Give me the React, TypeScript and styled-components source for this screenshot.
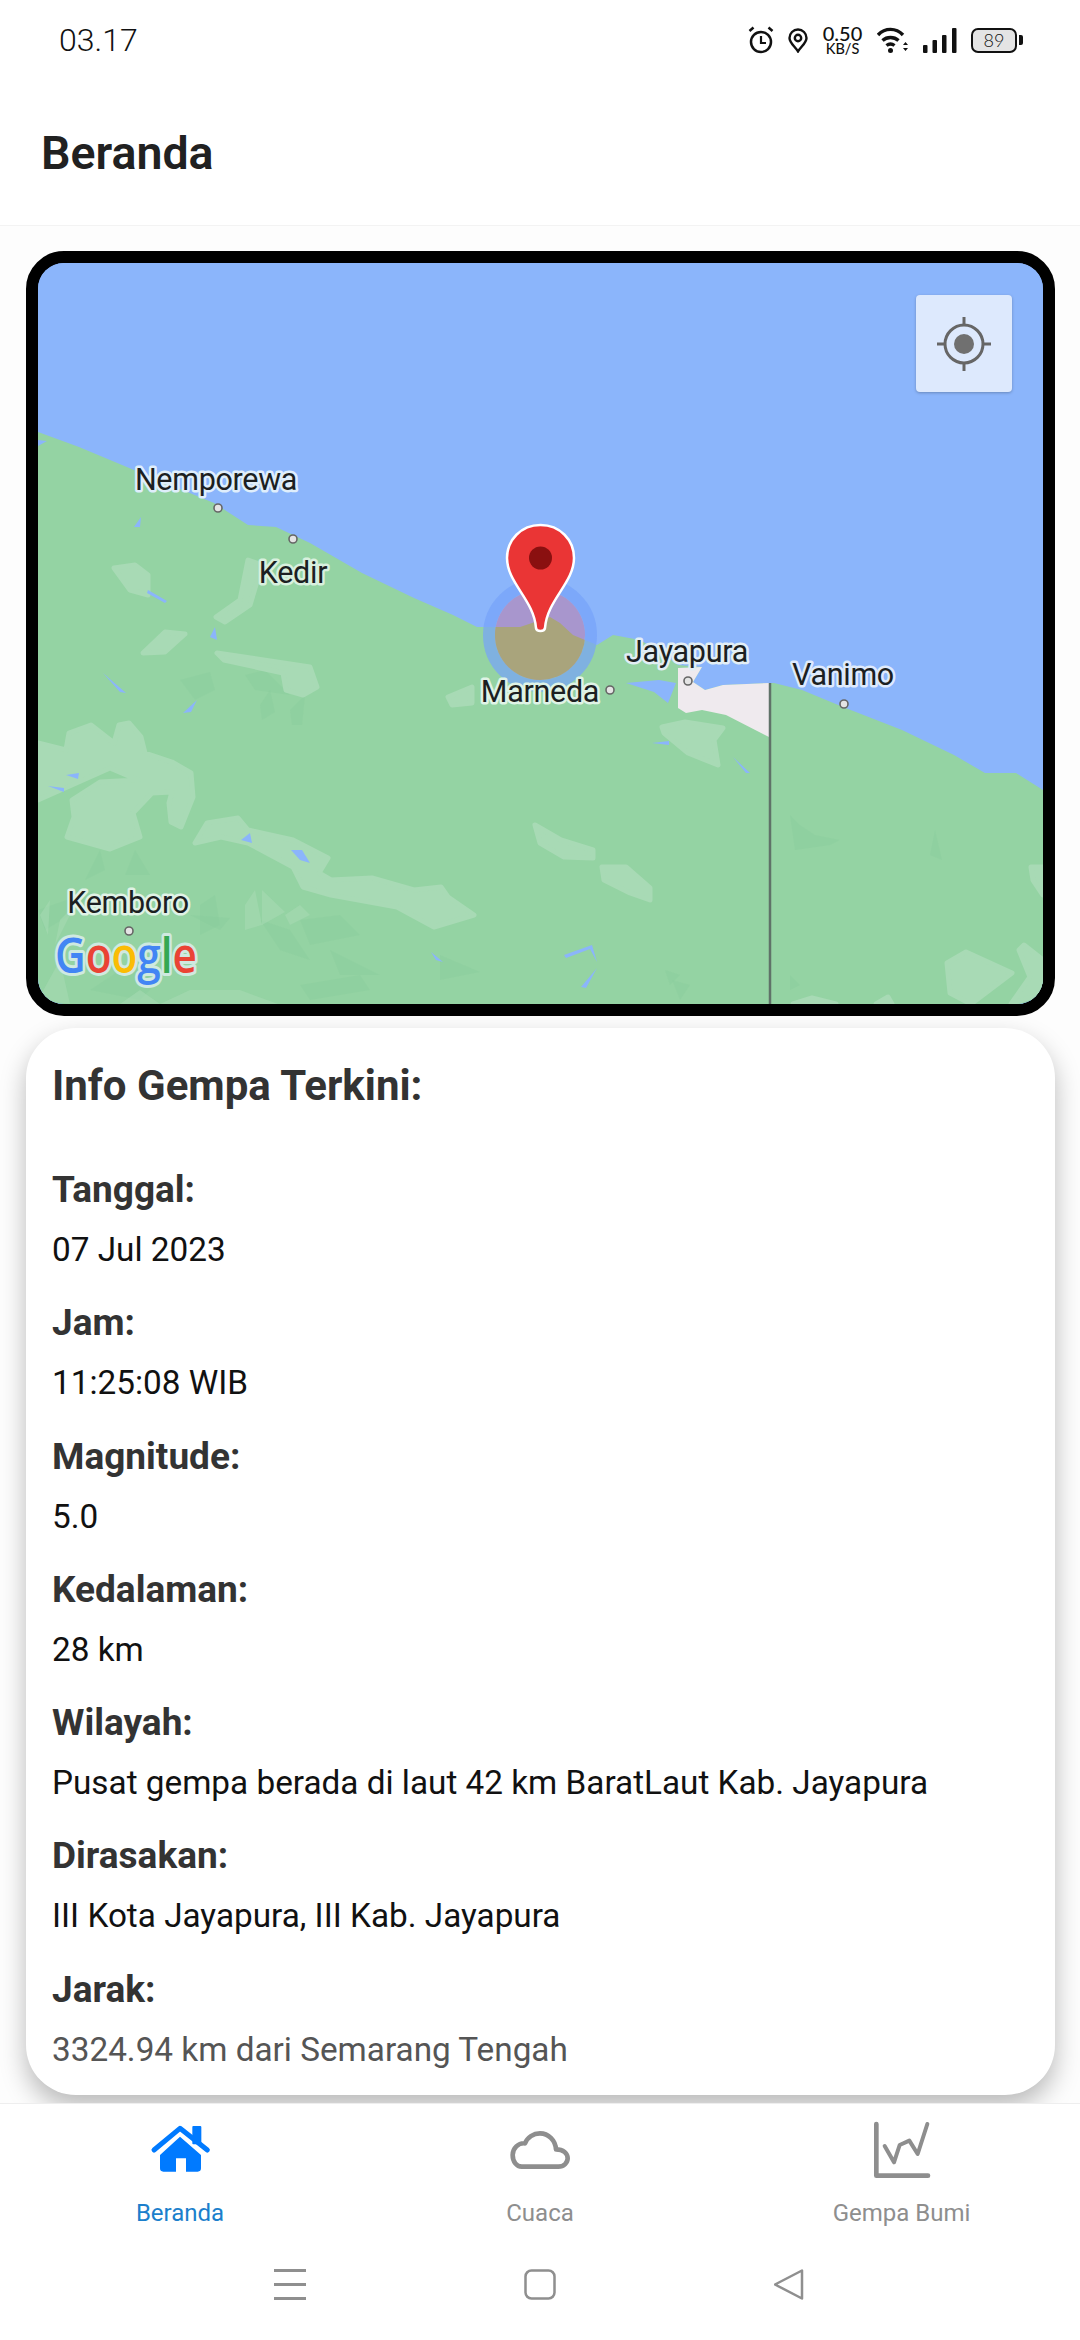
import React from 'react';
import styled, { createGlobalStyle } from 'styled-components';

const Global = createGlobalStyle`
  html, body { margin: 0; padding: 0; background: #fff; }
  body { font-family: Roboto, "Liberation Sans", sans-serif; }
  * { box-sizing: border-box; }
`;

const Screen = styled.div`
  width: 1080px; height: 2340px; display: flex; flex-direction: column; background: #fff; overflow: hidden;
`;
const StatusBar = styled.div`
  height: 80px; flex: none; display: flex; align-items: center; justify-content: space-between;
  padding: 0 58px 0 59px;
`;
const Clock = styled.span`
  font-family: Roboto, sans-serif; font-size: 32px; font-weight: 300; color: #111;
`;
const StatusIcons = styled.div`display: flex; align-items: center; gap: 14px;`;
const Speed = styled.div`
  display: flex; flex-direction: column; align-items: center; color: #111; font-family: Lato, Roboto, sans-serif;
  width: 41px; font-weight: 500;
`;
const SpeedValue = styled.span`font-size: 20px; line-height: 17px;`;
const SpeedUnit = styled.span`font-size: 14.5px; line-height: 13px;`;
const Battery = styled.div`
  position: relative; width: 46px; height: 25px; border: 2.5px solid #111; border-radius: 7px; background: #e4e4e4;
  display: flex; align-items: center; justify-content: center; font-family: Lato, sans-serif; font-size: 18px; font-weight: 300; color: #111;
  margin-right: 5px;
  &::after { content: ''; position: absolute; right: -7.5px; top: 5px; width: 3.5px; height: 10px; background: #111; border-radius: 0 2px 2px 0; }
`;
const Header = styled.header`
  height: 146px; flex: none; display: flex; align-items: center; padding: 2px 0 0 41px; border-bottom: 1px solid #f3f3f3;
`;
const Title = styled.h1`
  margin: 0; font-size: 46.5px; font-weight: 600; color: #212121; line-height: 1;
`;
const Content = styled.main`
  flex: 1; min-height: 0; padding: 25px 25px 8px 26px; display: flex; flex-direction: column; gap: 12px;
  background: #fdfdfd;
  position: relative; overflow: hidden;
`;
const MapFrame = styled.div`
  position: relative; height: 765px; flex: none; border: 12px solid #000; border-radius: 38px; overflow: hidden; background: #8ab4fb;
`;
const MapSvg = styled.svg`display: block; width: 100%; height: 100%;`;
const LocateButton = styled.div`
  position: absolute; top: 32px; right: 31px; width: 96px; height: 97px; border-radius: 4px;
  background: #dde9fd; box-shadow: 0 1px 3px rgba(0,0,0,.25); display: flex; align-items: center; justify-content: center;
`;
const Card = styled.section`
  flex: 1; min-height: 0; background: #fff; border-radius: 50px; padding: 34px 26px 0;
  box-shadow: 0 12px 26px rgba(0,0,0,.27);
`;
const CardTitle = styled.h2`
  margin: 0 0 56px; font-size: 42px; line-height: 48px; font-weight: 700; color: #333;
`;
const Field = styled.div`
  height: 133.3px;
`;
const Label = styled.div`
  font-size: 37px; line-height: 48px; font-weight: 700; color: #333;
`;
const Value = styled.div<{ $muted?: boolean }>`
  font-size: 33.3px; line-height: 40px; margin-top: 16px; color: ${p => (p.$muted ? '#555' : '#111')};
`;
const TabBar = styled.nav`
  height: 137px; flex: none; display: grid; grid-template-columns: repeat(3, 1fr); background: #fff;
  border-top: 1px solid #eee;
`;
const Tab = styled.div<{ $nudge?: boolean }>`
  display: flex; flex-direction: column; align-items: center; justify-content: flex-start; padding-top: 6px;
  padding-left: ${p => (p.$nudge ? '3px' : '0')};
`;
const TabLabel = styled.span<{ $active?: boolean }>`
  font-size: 24px; line-height: 28px; margin-top: 14px; color: ${p => (p.$active ? '#1b7fcc' : '#8e8e8e')};
`;
const SystemBar = styled.div`
  height: 100px; flex: none; display: flex; justify-content: center; align-items: flex-start; gap: 218px; padding-top: 29px; background: #fff;
`;

const land = '38,432 79,447 134,470 214,503 248,525 276,527 310,543 362,573 414,598 453,615 477,627 520,627 550,617 560,623 573,635 597,645 613,635 640,640 660,652 678,665 702,667 693,682 705,690 723,685 769,683 774,683 802,690 843,707 902,730 954,755 985,773 1016,773 1043,790 1043,1004 38,1004';

const lightPatches = [
  '114,568 130,590 148,595 148,575 135,565',
  '248,560 240,600 216,617 225,622 250,605 262,565',
  '143,653 165,632 185,634 165,652',
  '217,653 310,667 317,687 303,695 286,690 283,673 224,660',
  '38,743 66,750 69,733 91,725 114,743 119,725 129,723 141,737 145,753 172,762 191,773 193,797 181,827 171,822 169,803 172,792 152,793 133,813 140,837 110,849 67,837 74,817 72,800 100,782 138,780 110,768 38,800',
  '195,843 207,823 238,818 248,830 293,840 328,858 319,873 331,880 372,878 414,890 441,887 448,897 474,915 434,927 397,907 331,895 303,887 293,867 248,843 221,837',
  '448,697 472,687 472,703 452,705',
  '535,825 561,840 593,850 593,858 564,857 540,843',
  '602,867 626,867 650,888 650,900 630,893 604,880',
  '662,727 685,722 723,728 714,740 718,765 688,753 664,733',
  '947,963 966,952 1012,973 971,1004 950,993',
  '1019,950 1024,945 1043,960 1043,993 1011,1004 1030,977',
  '1031,867 1043,867 1043,895 1033,880',
  '793,1004 812,998 836,1004',
  '876,1004 888,997 892,1004',
];
const faintLight = [
  '38,1000 60,960 70,1004',
  '160,1004 190,990 240,990 278,1004',
  '120,1004 140,990 160,1004',
  '245,905 255,890 262,925 245,930',
  '262,890 285,912 262,925',
  '285,915 300,905 310,915 290,925',
  '40,915 50,900 48,935',
  '60,920 75,905 55,945',
];
const darkPatches = [
  '180,680 210,672 215,690 195,700',
  '245,675 265,670 290,695 255,690',
  '260,705 270,690 275,712 262,720',
  '290,710 305,695 302,725 292,725',
  '38,910 95,890 70,915 45,930',
  '100,850 85,880 105,870',
  '125,875 135,850 150,875',
  '200,905 215,895 220,925 200,935',
  '190,915 230,918 220,930',
  '260,920 290,930 310,960 280,950',
  '300,920 340,915 360,935 310,945',
  '330,950 380,975 340,975',
  '440,955 480,972 440,980',
  '300,985 360,975 370,990 310,1000',
  '790,815 800,825 815,835 840,840 830,845 795,850',
  '935,830 942,860 930,855',
  '672,980 690,985 680,1000',
  '665,970 680,975 670,985',
  '790,975 800,985 790,990',
  '128,965 165,975 140,1000 90,990',
];
const waters = [
  '66,775 79,773 78,779',
  '48,786 64,788 64,792',
  '241,840 250,833 252,843',
  '291,850 302,850 310,863 300,860',
  '183,713 197,700 191,712',
  '103,673 126,693 120,692',
  '431,952 443,962 436,960',
  '134,527 141,517 140,527',
  '210,637 215,627 217,640',
  '38,440 47,441 38,446',
  '148,590 167,601 165,603 147,593',
  '564,955 592,945 597,962 590,949 566,958',
  '581,987 597,968 586,988',
  '626,683 659,680 676,683 668,703 654,692',
  '652,743 669,741 669,745',
  '733,757 750,773 746,773',
];
const labels = [
  { t: 'Nemporewa', x: 216, y: 490, halo: '#dfeefb' },
  { t: 'Kedir', x: 293, y: 583, halo: '#d8f0de' },
  { t: 'Marneda', x: 540, y: 702, halo: '#dff3e6' },
  { t: 'Jayapura', x: 687, y: 662, halo: '#e2eef5' },
  { t: 'Vanimo', x: 843, y: 685, halo: '#deeafc' },
  { t: 'Kemboro', x: 128, y: 913, halo: '#e0f2e6' },
];
const dots = [[218, 508], [293, 539], [610, 690], [688, 681], [844, 704], [129, 931]];

const MapDrawing = () => (
  <MapSvg viewBox="38 263 1005 741" preserveAspectRatio="none">
    <defs>
      <clipPath id="landClip"><polygon points={land} /></clipPath>
    </defs>
    <rect x="38" y="263" width="1005" height="741" fill="#8bb5fb" />
    <polygon points={land} fill="#94d3a3" />
    {darkPatches.map((p, i) => <polygon key={i} points={p} fill="#86c89a" opacity={0.28} />)}
    {lightPatches.map((p, i) => <polygon key={i} points={p} fill="#a8dab5" stroke="#a8dab5" strokeWidth="5" strokeLinejoin="round" />)}
    {faintLight.map((p, i) => <polygon key={i} points={p} fill="#a9dbb6" opacity={0.5} />)}
    {waters.map((p, i) => <polygon key={i} points={p} fill="#8bb5fb" />)}
    <polygon points="678,668 702,667 693,682 705,690 723,685 769,683 769,737 726,715 702,710 686,713 678,708" fill="#efeaee" />
    <line x1="770" y1="683" x2="770" y2="1004" stroke="#5f7268" strokeWidth="2.5" />
    <circle cx="540" cy="635" r="51" fill="none" stroke="#76a3fa" strokeWidth="12" opacity="0.7" />
    <circle cx="540" cy="635" r="45" fill="#a896cd" />
    <circle cx="540" cy="635" r="45" fill="#a9a47c" clipPath="url(#landClip)" />
    {dots.map(([x, y], i) => <circle key={i} cx={x} cy={y} r="4" fill="#e4e4e4" stroke="#666" strokeWidth="1.6" />)}
    <g fontFamily="Roboto, sans-serif" fontSize="30.5" textAnchor="middle" fill="#1c1f22" strokeLinejoin="round">
      {labels.map(l => (
        <text key={l.t} x={l.x} y={l.y} stroke={l.halo} strokeWidth="5" paintOrder="stroke" letterSpacing="-0.3">{l.t}</text>
      ))}
    </g>
    <text x="55" y="973" fontFamily="'Open Sans', sans-serif" fontSize="49" fontWeight="600" stroke="#cfe9e0" strokeWidth="6" strokeLinejoin="round" paintOrder="stroke" textLength="142" lengthAdjust="spacingAndGlyphs">
      <tspan fill="#4285f4">G</tspan><tspan fill="#ea4335">o</tspan><tspan fill="#fbbc05">o</tspan><tspan fill="#4285f4">g</tspan><tspan fill="#34a853">l</tspan><tspan fill="#ea4335">e</tspan>
    </text>
    <path d="M540.5 525C521 525 507 540 507 558C507 583 534 600 536 628C536.5 632 544.5 632 545 628C547 600 574 583 574 558C574 540 560 525 540.5 525Z" fill="#ea3535" stroke="#fff" strokeWidth="2.5" />
    <circle cx="540.5" cy="558" r="11.5" fill="#8a1010" />
  </MapSvg>
);

const fields: { label: string; value: string; muted?: boolean }[] = [
  { label: 'Tanggal:', value: '07 Jul 2023' },
  { label: 'Jam:', value: '11:25:08 WIB' },
  { label: 'Magnitude:', value: '5.0' },
  { label: 'Kedalaman:', value: '28 km' },
  { label: 'Wilayah:', value: 'Pusat gempa berada di laut 42 km BaratLaut Kab. Jayapura' },
  { label: 'Dirasakan:', value: 'III Kota Jayapura, III Kab. Jayapura' },
  { label: 'Jarak:', value: '3324.94 km dari Semarang Tengah', muted: true },
];

export default function App() {
  return (
    <Screen>
      <Global />
      <StatusBar>
        <Clock>03.17</Clock>
        <StatusIcons>
          <svg width="26" height="28" viewBox="0 0 26 28" fill="none" stroke="#111" strokeWidth="2.5">
            <circle cx="13" cy="16" r="10" />
            <path d="M13 10v7h5" strokeWidth="2.2" />
            <path d="M1.500 5l4-3.500M24.500 5l-4-3.500" />
          </svg>
          <svg width="20" height="25" viewBox="0 0 20 25" fill="none" stroke="#111" strokeWidth="2.4">
            <path d="M10 23.500C7 18.500 1.500 15 1.500 10a8.500 8.500 0 0 1 17 0c0 5-5.500 8.500-8.500 13.500Z" />
            <circle cx="10" cy="10" r="3.200" />
          </svg>
          <Speed><SpeedValue>0.50</SpeedValue><SpeedUnit>KB/S</SpeedUnit></Speed>
          <svg width="32" height="26" viewBox="0 0 32 26" fill="none" stroke="#111" strokeWidth="3.4">
            <path d="M1 8C8 .5 19 .5 26 8" />
            <path d="M5.500 13.500c4.500-4 11.500-4 16 0" />
            <path d="M9.500 18.500c2.500-2 5.500-2 8 0" />
            <circle cx="13.500" cy="23.500" r="2.500" fill="#111" stroke="none" />
            <path d="M26 18l2.500-3 2.500 3zM26 21l2.500 3 2.500-3z" fill="#111" stroke="none" />
          </svg>
          <svg width="34" height="25" viewBox="0 0 34 25" fill="#111">
            <rect x="0" y="17" width="4.500" height="8" rx="1" />
            <rect x="9.500" y="12" width="4.500" height="13" rx="1" />
            <rect x="19" y="7" width="4.500" height="18" rx="1" />
            <rect x="29" y="0" width="4.500" height="25" rx="1" />
          </svg>
          <Battery>89</Battery>
        </StatusIcons>
      </StatusBar>
      <Header><Title>Beranda</Title></Header>
      <Content>
        <MapFrame>
          <MapDrawing />
          <LocateButton>
            <svg width="56" height="56" viewBox="0 0 56 56" fill="none" stroke="#666" strokeWidth="3">
              <circle cx="28" cy="28" r="19" />
              <circle cx="28" cy="28" r="10" fill="#707070" stroke="none" />
              <path d="M28 1v8M28 47v8M1 28h8M47 28h8" />
            </svg>
          </LocateButton>
        </MapFrame>
        <Card>
          <CardTitle>Info Gempa Terkini:</CardTitle>
          {fields.map(f => (
            <Field key={f.label}>
              <Label>{f.label}</Label>
              <Value $muted={f.muted}>{f.value}</Value>
            </Field>
          ))}
        </Card>
      </Content>
      <TabBar>
        <Tab>
          <svg width="100" height="75" viewBox="0 0 300 225">
            <rect x="187" y="48" width="27" height="55" rx="3" fill="#007aff" />
            <path d="M72 120L150 55L232 120" fill="none" stroke="#007aff" strokeWidth="15" strokeLinecap="round" strokeLinejoin="round" />
            <path d="M150 80L213 135V175a10 10 0 0 1-10 10H168V145H138V185H100a10 10 0 0 1-10-10V135Z" fill="#007aff" />
          </svg>
          <TabLabel $active>Beranda</TabLabel>
        </Tab>
        <Tab>
          <svg width="100" height="75" viewBox="0 0 300 225">
            <path d="M95 170H205C222 170 233 158 233 145C233 130 220 118 198 118C196 90 175 70 150 70C130 70 112 82 105 100C85 98 68 115 68 135C68 155 80 170 95 170Z" fill="none" stroke="#8e8e8e" strokeWidth="14" strokeLinejoin="round" />
          </svg>
          <TabLabel>Cuaca</TabLabel>
        </Tab>
        <Tab $nudge>
          <svg width="100" height="75" viewBox="0 0 300 225" fill="none" stroke="#8e8e8e" strokeLinecap="round" strokeLinejoin="round">
            <path d="M73 42V197H228" strokeWidth="14" />
            <path d="M98 108L126 157L143 105L172 92L197 132L226 42" strokeWidth="12" />
          </svg>
          <TabLabel>Gempa Bumi</TabLabel>
        </Tab>
      </TabBar>
      <SystemBar>
        <svg width="32" height="31" viewBox="0 0 32 31" fill="#8f8f8f">
          <rect x="0" y="0" width="32" height="3" /><rect x="0" y="14" width="32" height="3" /><rect x="0" y="28" width="32" height="3" />
        </svg>
        <svg width="32" height="31" viewBox="0 0 32 31" fill="none" stroke="#8f8f8f" strokeWidth="2.500">
          <rect x="1.500" y="1.500" width="29" height="28" rx="6" />
        </svg>
        <svg width="32" height="31" viewBox="0 0 32 31" fill="none" stroke="#8f8f8f" strokeWidth="2.500" strokeLinejoin="round">
          <path d="M28 1.500V29.500L1 15.500Z" />
        </svg>
      </SystemBar>
    </Screen>
  );
}
